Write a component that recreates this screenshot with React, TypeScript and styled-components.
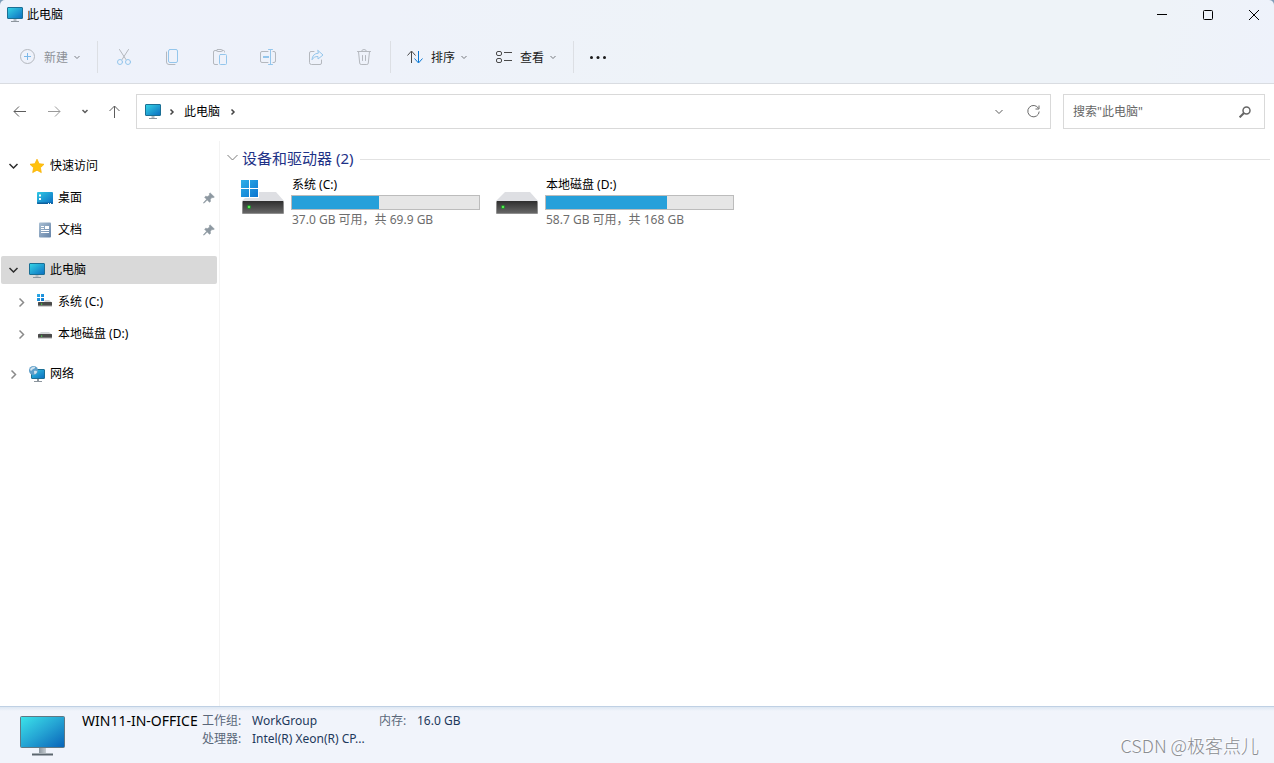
import React, { useId } from "react";
import styled, { createGlobalStyle } from "styled-components";

const GlobalStyle = createGlobalStyle`
  *, *::before, *::after { box-sizing: border-box; }
  body {
    margin: 0;
    background: #fff;
    color: #000;
    font-family: "Noto Sans", "Noto Sans CJK SC", sans-serif;
    font-size: 12px;
    line-height: 16px;
  }
  svg { display: block; flex: none; }
  button, input { font: inherit; color: inherit; }
`;

const Shell = styled.div`
  display: flex;
  flex-direction: column;
  min-height: 100vh;
`;

const Frame = styled.header`
  background: #7f9db8;
`;

const Chrome = styled.div`
  border-radius: 5px 5px 0 0;
  border-bottom: 1px solid #d9dce1;
  background: linear-gradient(100deg, #eef2fb 0%, #eef2fa 30%, #eef3f8 55%, #eef3f8 90%, #eef2fb 100%);
`;

const TitleBar = styled.div`
  display: flex;
  align-items: center;
  height: 31px;
  padding: 0 0 2px 7px;
`;

const Title = styled.h1`
  flex: 1;
  margin: 0 0 0 4px;
  font-size: 12px;
  font-weight: 400;
`;

const PlainButton = styled.button`
  display: flex;
  align-items: center;
  justify-content: center;
  border: 0;
  padding: 0;
  background: none;
  white-space: nowrap;
`;

const WindowControls = styled.div`
  display: flex;
  gap: 6px;
`;

const WindowButton = styled(PlainButton)`
  width: 40px;
  height: 28px;
`;

const Toolbar = styled.div`
  display: flex;
  align-items: center;
  height: 52px;
`;

const MenuButton = styled(PlainButton)<{ $first?: boolean; $muted?: boolean }>`
  height: 32px;
  padding: 0 15px 0 ${(p) => (p.$first ? 20 : 14)}px;
  color: ${(p) => (p.$muted ? "#8d9197" : "#1a1a1a")};
`;

const MenuText = styled.span`
  margin: 0 6px 0 8px;
  padding-top: 1px;
`;

const IconButton = styled(PlainButton)<{ $width: number }>`
  flex: none;
  width: ${(p) => p.$width}px;
  height: 32px;
`;

const Separator = styled.div`
  width: 1px;
  height: 32px;
  margin: 0 2px;
  background: #dcdfe4;
`;

const NavBar = styled.div`
  display: flex;
  align-items: center;
  padding: 10px 9px 12px 2px;
`;

const AddressBox = styled.nav`
  display: flex;
  flex: 1;
  align-items: center;
  height: 35px;
  margin: 0 12px 0 5px;
  padding-left: 8px;
  border: 1px solid #d9d9d9;
`;

const Crumbs = styled.div`
  display: flex;
  flex: 1;
  align-items: center;
`;

const CrumbChevron = styled.span`
  padding: 0 10px 0 8px;
`;

const CrumbLink = styled.a`
  margin-right: 2px;
  color: #000;
  text-decoration: none;
`;

const SearchBox = styled.form`
  display: flex;
  align-items: center;
  width: 202px;
  height: 35px;
  border: 1px solid #d9d9d9;
`;

const SearchInput = styled.input`
  flex: 1;
  min-width: 0;
  border: 0;
  padding: 0 0 0 9px;
  outline: 0;
  background: none;
  &::placeholder { color: #666; opacity: 1; }
`;

const Body = styled.div`
  display: flex;
  flex: 1;
`;

const Sidebar = styled.nav`
  display: flex;
  flex: none;
  flex-direction: column;
  gap: 12px;
  width: 220px;
  padding: 11px 2px 0 1px;
  border-right: 1px solid #f3f3f3;
`;

const TreeGroup = styled.div`
  display: flex;
  flex-direction: column;
  gap: 4px;
`;

const TreeRow = styled.a<{ $level: number; $selected?: boolean }>`
  display: flex;
  align-items: center;
  height: 28px;
  padding: 0 2px 0 ${(p) => 7 + p.$level * 8}px;
  border-radius: 2px;
  background: ${(p) => (p.$selected ? "#d9d9d9" : "transparent")};
  color: #000;
  text-decoration: none;
`;

const Expander = styled.span`
  display: flex;
  justify-content: center;
  width: 11px;
  margin-right: 10px;
`;

const TreeIcon = styled.span`
  display: flex;
  justify-content: center;
  width: 16px;
  margin-right: 5px;
`;

const TreeLabel = styled.span`
  flex: 1;
`;

const Main = styled.main`
  flex: 1;
  min-width: 0;
  padding: 7px 4px 0 7px;
`;

const GroupHeader = styled.div`
  display: flex;
  align-items: center;
  height: 20px;
  &::after {
    content: "";
    flex: 1;
    height: 1px;
    margin: 2px 0 0 7px;
    background: #e2e2e2;
  }
`;

const GroupTitle = styled.h2`
  margin: 0 0 0 4px;
  color: #1e3287;
  font-size: 15px;
  font-weight: 400;
  line-height: 20px;
`;

const DriveList = styled.div`
  display: flex;
  flex-wrap: wrap;
  padding: 9px 0 0 14px;
`;

const DriveTile = styled.a`
  display: flex;
  width: 254px;
  gap: 7px;
  color: #000;
  text-decoration: none;
`;

const DriveArt = styled.span`
  padding-top: 3px;
`;

const DriveInfo = styled.div`
  width: 189px;
`;

const DriveText = styled.div<{ $muted?: boolean }>`
  padding-left: 1px;
  color: ${(p) => (p.$muted ? "#6d6d6d" : "#000")};
  white-space: nowrap;
`;

const UsageBar = styled.div`
  height: 15px;
  margin: 2px 0;
  border: 1px solid #bcbcbc;
  background: #e6e6e6;
`;

const UsageFill = styled.div<{ $percent: number }>`
  width: ${(p) => p.$percent}%;
  height: 100%;
  background: #26a0da;
`;

const DetailsPane = styled.footer`
  display: flex;
  align-items: flex-start;
  height: 57px;
  padding: 6px 15px 0 20px;
  border-top: 1px solid #bfd0e4;
  background: linear-gradient(#dde7f2 0, #f1f4fb 4px, #f1f4fb 100%);
`;

const PaneArt = styled.span`
  padding: 3px 17px 0 0;
`;

const MachineName = styled.strong`
  width: 120px;
  font-size: 14px;
  font-weight: 400;
  white-space: nowrap;
`;

const Facts = styled.dl`
  display: grid;
  grid-template-columns: 50px 127px 38px auto;
  row-gap: 2px;
  margin: 0;
`;

const FactLabel = styled.dt`
  color: #5a6779;
`;

const FactValue = styled.dd`
  margin: 0;
  color: #1e395b;
  white-space: nowrap;
`;

const Watermark = styled.span`
  align-self: flex-end;
  margin: 0 0 6px auto;
  color: #8b8d91;
  font-family: "Noto Sans CJK SC", sans-serif;
  font-size: 18px;
  font-weight: 300;
  line-height: 24px;
  text-shadow: -1px -1px 0 #fff;
`;

type ChevronProps = { color: string; direction: "down" | "right"; size?: number; weight?: number };

function Chevron({ color, direction, size = 6, weight = 1 }: ChevronProps) {
  const half = size / 2;
  const down = direction === "down";
  return (
    <svg width={down ? size : half + 2} height={down ? half + 2 : size} fill="none" stroke={color} strokeWidth={weight} overflow="visible">
      <path d={down ? `M.5 1 L${half} ${half + 0.5} L${size - 0.5} 1` : `M1.5 .5 L${half + 1} ${half} L1.5 ${size - 0.5}`} />
    </svg>
  );
}

function MonitorIcon() {
  const id = useId();
  return (
    <svg width="16" height="15" viewBox="0 0 16 15">
      <defs>
        <linearGradient id={id} x1="0" y1="0" x2="1" y2="1">
          <stop offset="0" stopColor="#35d6e6" />
          <stop offset="1" stopColor="#0c6cc0" />
        </linearGradient>
      </defs>
      <rect x=".5" y=".5" width="15" height="11" rx=".5" fill={`url(#${id})`} stroke="#1b6f94" />
      <path d="M6.5 12h3v2h-3z" fill="#b5bcc3" />
      <path d="M4 14h8v1H4z" fill="#8d969e" />
    </svg>
  );
}

function LargeMonitorIcon() {
  const id = useId();
  return (
    <svg width="45" height="40" viewBox="0 0 45 40">
      <defs>
        <linearGradient id={id} x1="0" y1="0" x2="1" y2="1">
          <stop offset="0" stopColor="#3ce4ea" />
          <stop offset=".5" stopColor="#25a5d4" />
          <stop offset="1" stopColor="#0862b8" />
        </linearGradient>
        <linearGradient id={`${id}n`} x1="0" y1="0" x2="1" y2="0">
          <stop offset="0" stopColor="#8d979f" />
          <stop offset="1" stopColor="#c6ccd1" />
        </linearGradient>
      </defs>
      <path d="M19 32h7v5h-7z" fill={`url(#${id}n)`} />
      <rect x=".5" y=".5" width="44" height="31" rx="1" fill={`url(#${id})`} stroke="#5f7884" />
      <path d="M12 37h21v2.500H12z" fill="#5c666e" />
      <path d="M12 37h21v1H12z" fill="#a5adb3" />
    </svg>
  );
}

function WindowsTiles({ unit, gap }: { unit: number; gap: number }) {
  const id = useId();
  const full = unit * 2 + gap;
  const far = unit + gap;
  return (
    <g>
      <defs>
        <linearGradient id={id} gradientUnits="userSpaceOnUse" x1="0" y1="0" x2={full} y2={full}>
          <stop offset="0" stopColor="#2fb0e8" />
          <stop offset="1" stopColor="#0a74d0" />
        </linearGradient>
      </defs>
      <path
        fill={`url(#${id})`}
        d={`M0 0h${unit}v${unit}H0zM${far} 0h${unit}v${unit}H${far}zM0 ${far}h${unit}v${unit}H0zM${far} ${far}h${unit}v${unit}H${far}z`}
      />
    </g>
  );
}

function LargeDriveIcon({ system }: { system?: boolean }) {
  const id = useId();
  return (
    <svg width="43" height="34" viewBox="0 0 43 34">
      <defs>
        <linearGradient id={id} x1="0" y1="0" x2="0" y2="1">
          <stop offset="0" stopColor="#2e2e2e" />
          <stop offset="1" stopColor="#666" />
        </linearGradient>
      </defs>
      <path d="M10 12h25l8 9H1z" fill="#dedfe3" />
      <rect x="1" y="21" width="42" height="13" rx="1" fill="#8f8f8f" />
      <rect x="2" y="21" width="40" height="12" fill={`url(#${id})`} />
      <circle cx="8" cy="27" r="2" fill="#1f9a2b" />
      <circle cx="8" cy="27" r="1" fill="#6dff5c" />
      {system && <path d="M0 12h18v6H0z" fill="#fff" />}
      {system && <WindowsTiles unit={8} gap={1} />}
    </svg>
  );
}

function SmallDriveIcon({ system }: { system?: boolean }) {
  return (
    <svg width="16" height="17" viewBox="0 0 16 17">
      <path d="M4 6h8l3 2.500H1z" fill="#d4d6d9" />
      <rect x="1" y="8" width="14" height="4" rx=".5" fill="#4a4a4a" />
      <path d="M1 11.500h14v1H1z" fill="#a7a7a7" />
      <path d="M4 9.500h1.200v1.200H4z" fill="#45e04a" />
      {system && <path d="M0 5h7.500v3H0z" fill="#fff" />}
      {system && <WindowsTiles unit={3} gap={1} />}
    </svg>
  );
}

function StarIcon() {
  return (
    <svg width="16" height="16" viewBox="0 0 16 16">
      <path d="M8 1.200l2.100 4.500 4.900.6-3.600 3.400.9 4.900L8 12.200l-4.300 2.400.9-4.900L1 6.300l4.900-.6z" fill="#ffc20e" stroke="#f9b208" strokeWidth=".8" strokeLinejoin="round" />
    </svg>
  );
}

function DesktopIcon() {
  const id = useId();
  return (
    <svg width="16" height="12" viewBox="0 0 16 12">
      <defs>
        <linearGradient id={id} x1="0" y1="0" x2="1" y2="1">
          <stop offset="0" stopColor="#2fc8e4" />
          <stop offset="1" stopColor="#0b6dc2" />
        </linearGradient>
      </defs>
      <rect width="16" height="12" rx="1" fill={`url(#${id})`} />
      <path d="M0 10.500h16V11a1 1 0 0 1-1 1H1a1 1 0 0 1-1-1z" fill="#0d5f9c" />
      <path d="M2 2.500h2v2H2zM2 6h2v2H2zM11 11h1v1h-1zM13 11h1v1h-1z" fill="#fff" />
    </svg>
  );
}

function DocumentIcon() {
  const id = useId();
  return (
    <svg width="12" height="16" viewBox="0 0 12 16">
      <defs>
        <linearGradient id={id} x1="0" y1="0" x2="1" y2="1">
          <stop offset="0" stopColor="#a9bfd3" />
          <stop offset="1" stopColor="#6583a8" />
        </linearGradient>
      </defs>
      <rect width="12" height="15" y=".5" rx="1" fill={`url(#${id})`} />
      <path d="M2 4h3v1H2zM2 6h3v1H2zM6 4h4v3H6zM2 8h8v1H2zM2 10h8v1H2z" fill="#fff" />
    </svg>
  );
}

function NetworkIcon() {
  const id = useId();
  return (
    <svg width="16" height="16" viewBox="0 0 16 16">
      <defs>
        <linearGradient id={id} x1="0" y1="0" x2="1" y2="1">
          <stop offset="0" stopColor="#35c9e2" />
          <stop offset="1" stopColor="#0c6cc0" />
        </linearGradient>
      </defs>
      <rect x="2.500" y="3.500" width="13" height="9" rx=".5" fill={`url(#${id})`} stroke="#1b6f94" />
      <path d="M8 13h2v2H8zM5 15h8v1H5z" fill="#8d969e" />
      <circle cx="4.500" cy="4.500" r="4.500" fill="#5f9fc9" />
      <path d="M1.500 2.500C3 .6 5 .4 6 1c.5 1-.6 1.800-2 2-.8.600-1 2-2 1.800C1 4.500 1 3.400 1.500 2.500zM5 5c1.500-.6 3 0 3.200.8C7.500 7.500 6.500 8 5.600 8.200 5 7.500 5.200 6 5 5z" fill="#cfe2ee" />
    </svg>
  );
}

function PinIcon() {
  return (
    <svg width="12" height="12" viewBox="0 0 12 12" fill="#8d98a1" stroke="#8d98a1" strokeWidth=".5">
      <path d="M7 .8L11.400 5l-1.200.7-1.300-.1-1.500 1.700.1 2.200-1 .8-2.300-2.300L1 11.300l-.6-.5L3.500 7.300 1.600 5.200l.9-.9 2.200.2 1.900-1.600-.3-1.200z" />
    </svg>
  );
}

const GREY = "#b4b8be";
const BLUE = "#94c6ec";

function ToolGlyph({ children }: { children: React.ReactNode }) {
  return (
    <svg width="16" height="16" viewBox="0 0 16 16" fill="none" strokeLinecap="round" strokeLinejoin="round">
      {children}
    </svg>
  );
}

const tools = [
  {
    name: "剪切",
    glyph: (
      <>
        <path d="M3.500.5L10 10.600M12.500.5L6 10.600" stroke={GREY} />
        <circle cx="4" cy="13" r="2.500" stroke={BLUE} />
        <circle cx="12" cy="13" r="2.500" stroke={BLUE} />
      </>
    ),
  },
  {
    name: "复制",
    glyph: (
      <>
        <path d="M2.500 3v10a2.500 2.500 0 0 0 2.500 2.500h6" stroke={GREY} />
        <rect x="4.500" y=".5" width="9" height="13" rx="1.500" stroke={BLUE} />
      </>
    ),
  },
  {
    name: "粘贴",
    glyph: (
      <>
        <path d="M5 1.500H3A1.500 1.500 0 0 0 1.500 3v11A1.500 1.500 0 0 0 3 15.500h2.500M10 1.500h1.500q1 0 1 1V3" stroke={GREY} />
        <rect x="4.500" y=".5" width="6" height="2" rx="1" stroke={GREY} />
        <rect x="7.500" y="5.500" width="7" height="10" rx="1" stroke={BLUE} />
      </>
    ),
  },
  {
    name: "重命名",
    glyph: (
      <>
        <path d="M8 2.500H2A1.500 1.500 0 0 0 .5 4v8A1.500 1.500 0 0 0 2 13.500h6M13 2.500h1A1.500 1.500 0 0 1 15.500 4v8a1.500 1.500 0 0 1-1.500 1.500h-1" stroke={GREY} />
        <path d="M8.500.5h4M8.500 15.500h4M10.500.5v15" stroke={BLUE} />
        <path d="M3 8h6" stroke={BLUE} strokeWidth="2" strokeLinecap="butt" />
      </>
    ),
  },
  {
    name: "共享",
    glyph: (
      <>
        <path d="M6 2.500H3a1.500 1.500 0 0 0-1.500 1.500v9.500a2 2 0 0 0 2 2h8.500a1.500 1.500 0 0 0 1.500-1.500V11" stroke={GREY} />
        <path d="M10 1.500l5 4.500-5 4V7.500C7 7.400 5.300 8.600 4 10.800 4.200 6.800 6.300 4.500 10 4.200z" stroke={BLUE} />
      </>
    ),
  },
  {
    name: "删除",
    glyph: (
      <>
        <path d="M1.500 2.500h13M5.500 2.500a2.500 2 0 0 1 5 0M2.500 2.500l1.200 11.600a1.500 1.500 0 0 0 1.500 1.400h5.600a1.500 1.500 0 0 0 1.500-1.400L13.500 2.500M6.500 6.500v5M9.500 6.500v5" stroke={GREY} />
      </>
    ),
  },
];

type Node = {
  label: string;
  level: number;
  icon: React.ReactNode;
  open?: boolean;
  leaf?: boolean;
  selected?: boolean;
};

const tree: Node[][] = [
  [
    { label: "快速访问", level: 0, icon: <StarIcon />, open: true },
    { label: "桌面", level: 1, icon: <DesktopIcon />, leaf: true },
    { label: "文档", level: 1, icon: <DocumentIcon />, leaf: true },
  ],
  [
    { label: "此电脑", level: 0, icon: <MonitorIcon />, open: true, selected: true },
    { label: "系统 (C:)", level: 1, icon: <SmallDriveIcon system /> },
    { label: "本地磁盘 (D:)", level: 1, icon: <SmallDriveIcon /> },
  ],
  [{ label: "网络", level: 0, icon: <NetworkIcon /> }],
];

const drives = [
  { name: "系统 (C:)", space: "37.0 GB 可用，共 69.9 GB", percent: 46.5, system: true },
  { name: "本地磁盘 (D:)", space: "58.7 GB 可用，共 168 GB", percent: 64.7, system: false },
];

export default function App() {
  return (
    <Shell>
      <GlobalStyle />
      <Frame>
        <Chrome>
          <TitleBar>
            <MonitorIcon />
            <Title>此电脑</Title>
            <WindowControls>
              <WindowButton aria-label="最小化">
                <svg width="10" height="11" stroke="#000"><path d="M0 5.500h10" /></svg>
              </WindowButton>
              <WindowButton aria-label="最大化">
                <svg width="10" height="10" fill="none" stroke="#000"><rect x=".5" y=".5" width="9" height="9" rx="1" /></svg>
              </WindowButton>
              <WindowButton aria-label="关闭">
                <svg width="10" height="10" stroke="#000"><path d="M0 0l10 10M10 0l-10 10" /></svg>
              </WindowButton>
            </WindowControls>
          </TitleBar>
          <Toolbar>
            <MenuButton $first $muted>
              <svg width="16" height="16" fill="none">
                <circle cx="7.500" cy="7.500" r="7" stroke={GREY} />
                <path d="M7.500 4v7M4 7.500h7" stroke="#7bb8e8" />
              </svg>
              <MenuText>新建</MenuText>
              <Chevron direction="down" color="#7b7f85" />
            </MenuButton>
            <Separator />
            {tools.map((t) => (
              <IconButton key={t.name} $width={48} aria-label={t.name}>
                <ToolGlyph>{t.glyph}</ToolGlyph>
              </IconButton>
            ))}
            <Separator />
            <MenuButton>
              <svg width="16" height="14" fill="none" overflow="visible">
                <path d="M4.500 13V1.500M.5 5.500l4-4.500 4 4.500" stroke="#4a4a4a" />
                <path d="M11.500 1v11.500M7.500 8.500l4 4.500 4-4.500" stroke="#0a78d4" />
              </svg>
              <MenuText>排序</MenuText>
              <Chevron direction="down" color="#75787d" />
            </MenuButton>
            <MenuButton>
              <svg width="16" height="13" fill="none" stroke="#4a4a4a">
                <rect x=".5" y=".5" width="5" height="4" rx="1.500" />
                <rect x=".5" y="7.500" width="5" height="4" rx="1.500" />
                <path d="M8 1.500h8M8 9.500h8" />
              </svg>
              <MenuText>查看</MenuText>
              <Chevron direction="down" color="#75787d" />
            </MenuButton>
            <Separator />
            <IconButton $width={44} aria-label="查看更多">
              <svg width="16" height="4" fill="#1a1a1a">
                <circle cx="1.500" cy="2.500" r="1.500" />
                <circle cx="8" cy="2.500" r="1.500" />
                <circle cx="14.500" cy="2.500" r="1.500" />
              </svg>
            </IconButton>
          </Toolbar>
        </Chrome>
      </Frame>
      <NavBar>
        <IconButton $width={35} aria-label="后退">
          <svg width="13" height="11" fill="none" stroke="#5c5c5c"><path d="M13 5.500H1M6 .5l-5 5 5 5" /></svg>
        </IconButton>
        <IconButton $width={35} aria-label="前进">
          <svg width="13" height="11" fill="none" stroke="#9a9a9a"><path d="M0 5.500h12M7 .5l5 5-5 5" /></svg>
        </IconButton>
        <IconButton $width={26} aria-label="最近浏览的位置">
          <Chevron direction="down" color="#5c5c5c" weight={1.5} />
        </IconButton>
        <IconButton $width={33} aria-label="上移">
          <svg width="11" height="13" fill="none" stroke="#5c5c5c"><path d="M5.500 13V1M.5 6l5-5 5 5" /></svg>
        </IconButton>
        <AddressBox aria-label="地址">
          <Crumbs>
            <MonitorIcon />
            <CrumbChevron><Chevron direction="right" color="#444" weight={1.5} /></CrumbChevron>
            <CrumbLink href="#this-pc">此电脑</CrumbLink>
            <CrumbChevron><Chevron direction="right" color="#444" weight={1.5} /></CrumbChevron>
          </Crumbs>
          <IconButton $width={34} aria-label="展开地址">
            <Chevron direction="down" color="#5c5c5c" size={8} />
          </IconButton>
          <IconButton $width={34} aria-label="刷新">
            <svg width="13" height="13" fill="none" stroke="#6a6a6a">
              <path d="M11.500 3.400A5.700 5.700 0 1 0 12.200 6.500M12 .5v3.500H8.500" />
            </svg>
          </IconButton>
        </AddressBox>
        <SearchBox role="search">
          <SearchInput aria-label="搜索此电脑" placeholder={'搜索"此电脑"'} />
          <IconButton $width={38} type="button" aria-label="搜索">
            <svg width="12" height="12" fill="none" stroke="#666" strokeWidth="1.500">
              <circle cx="7.500" cy="4.500" r="3.500" />
              <path d="M5 7L.6 11.400" strokeWidth="2" />
            </svg>
          </IconButton>
        </SearchBox>
      </NavBar>
      <Body>
        <Sidebar aria-label="导航窗格">
          {tree.map((group) => (
            <TreeGroup key={group[0].label}>
              {group.map((n) => (
                <TreeRow key={n.label} href="#" $level={n.level} $selected={n.selected}>
                  <Expander>
                    {!n.leaf &&
                      (n.open ? (
                        <Chevron direction="down" color="#2b2b2b" size={9} weight={1.5} />
                      ) : (
                        <Chevron direction="right" color="#8a8a8a" size={9} weight={1.5} />
                      ))}
                  </Expander>
                  <TreeIcon>{n.icon}</TreeIcon>
                  <TreeLabel>{n.label}</TreeLabel>
                  {n.leaf && <PinIcon />}
                </TreeRow>
              ))}
            </TreeGroup>
          ))}
        </Sidebar>
        <Main>
          <GroupHeader>
            <Chevron direction="down" color="#7d7d7d" size={11} />
            <GroupTitle>设备和驱动器 (2)</GroupTitle>
          </GroupHeader>
          <DriveList>
            {drives.map((d) => (
              <DriveTile key={d.name} href="#">
                <DriveArt><LargeDriveIcon system={d.system} /></DriveArt>
                <DriveInfo>
                  <DriveText>{d.name}</DriveText>
                  <UsageBar role="progressbar" aria-label={d.name} aria-valuenow={d.percent}>
                    <UsageFill $percent={d.percent} />
                  </UsageBar>
                  <DriveText $muted>{d.space}</DriveText>
                </DriveInfo>
              </DriveTile>
            ))}
          </DriveList>
        </Main>
      </Body>
      <DetailsPane>
        <PaneArt><LargeMonitorIcon /></PaneArt>
        <MachineName>WIN11-IN-OFFICE</MachineName>
        <Facts>
          <FactLabel>工作组:</FactLabel>
          <FactValue>WorkGroup</FactValue>
          <FactLabel>内存:</FactLabel>
          <FactValue>16.0 GB</FactValue>
          <FactLabel>处理器:</FactLabel>
          <FactValue>Intel(R) Xeon(R) CP...</FactValue>
        </Facts>
        <Watermark>CSDN @极客点儿</Watermark>
      </DetailsPane>
    </Shell>
  );
}
